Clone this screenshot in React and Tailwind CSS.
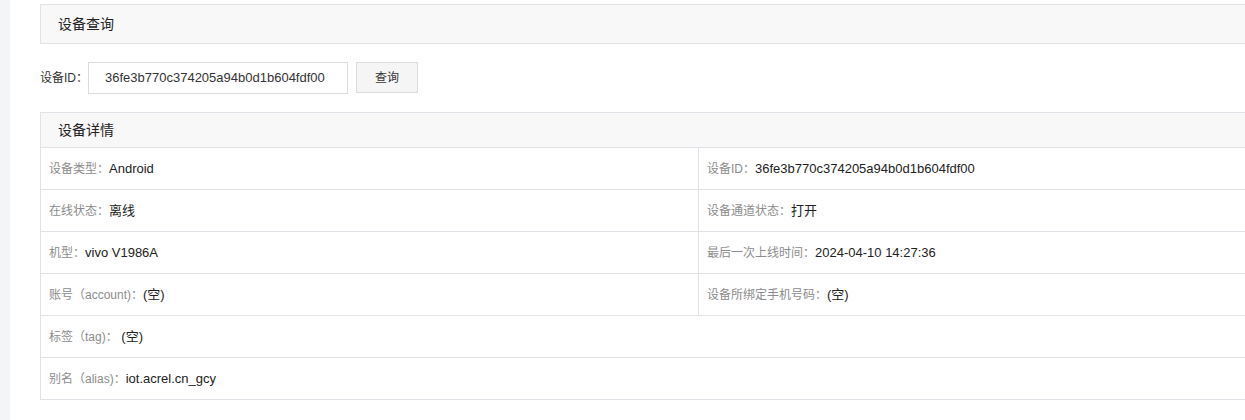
import React, { useState } from "react";

const rows = [
  [
    { label: "设备类型：", value: "Android" },
    { label: "设备ID：", value: "36fe3b770c374205a94b0d1b604fdf00" },
  ],
  [
    { label: "在线状态：", value: "离线" },
    { label: "设备通道状态：", value: "打开" },
  ],
  [
    { label: "机型：", value: "vivo V1986A" },
    { label: "最后一次上线时间：", value: "2024-04-10 14:27:36" },
  ],
  [
    { label: "账号（account)：", value: "(空)" },
    { label: "设备所绑定手机号码：", value: "(空)" },
  ],
  [{ label: "标签（tag)：", value: " (空)" }],
  [{ label: "别名（alias)：", value: "iot.acrel.cn_gcy" }],
];

function Cell({ label, value, divider }) {
  return (
    <div
      className={
        "flex-1 flex items-center pl-2 whitespace-nowrap " +
        (divider ? "border-r border-[#dfe3e8]" : "")
      }
    >
      <span className="text-[12px] text-[#8c8c8c]">{label}</span>
      <span className="text-[13px] text-[#222] whitespace-pre">{value}</span>
    </div>
  );
}

export default function App() {
  const [deviceId, setDeviceId] = useState("36fe3b770c374205a94b0d1b604fdf00");

  return (
    <div
      className="flex h-[420px] overflow-hidden bg-white text-[#333]"
      style={{ fontFamily: '"Liberation Sans", "Noto Sans CJK SC", sans-serif' }}
    >
      <div className="w-[10px] shrink-0 bg-[#f4f5f7]" />
      <div className="ml-[30px] w-[1316px] shrink-0 pt-[4px]">
        <div className="h-[40px] flex items-center pl-[17px] border border-r-0 border-[#dfe3e8] bg-[#f8f8f8] text-[14px] text-[#222]">
          设备查询
        </div>

        <div className="flex items-center h-[68px] pb-[1px]">
          <span className="text-[12px] w-[48px] whitespace-nowrap">设备ID：</span>
          <input
            value={deviceId}
            onChange={(e) => setDeviceId(e.target.value)}
            className="w-[260px] h-[32px] border border-[#dcdcdc] pl-[16px] text-[13px] text-[#333] outline-none"
          />
          <button className="ml-[8px] w-[62px] h-[31px] border border-[#dcdcdc] bg-[#f5f5f5] text-[12px]">
            查询
          </button>
        </div>

        <div className="border-t border-l border-[#dfe3e8]">
          <div className="h-[35px] flex items-center pl-[17px] bg-[#f8f8f8] text-[14px] text-[#222] border-b border-[#dfe3e8]">
            设备详情
          </div>
          {rows.map((row, i) => (
            <div key={i} className="flex h-[42px] border-b border-[#dfe3e8]">
              {row.map((c, j) => (
                <Cell
                  key={j}
                  label={c.label}
                  value={c.value}
                  divider={row.length > 1 && j === 0}
                />
              ))}
            </div>
          ))}
        </div>
      </div>
    </div>
  );
}
